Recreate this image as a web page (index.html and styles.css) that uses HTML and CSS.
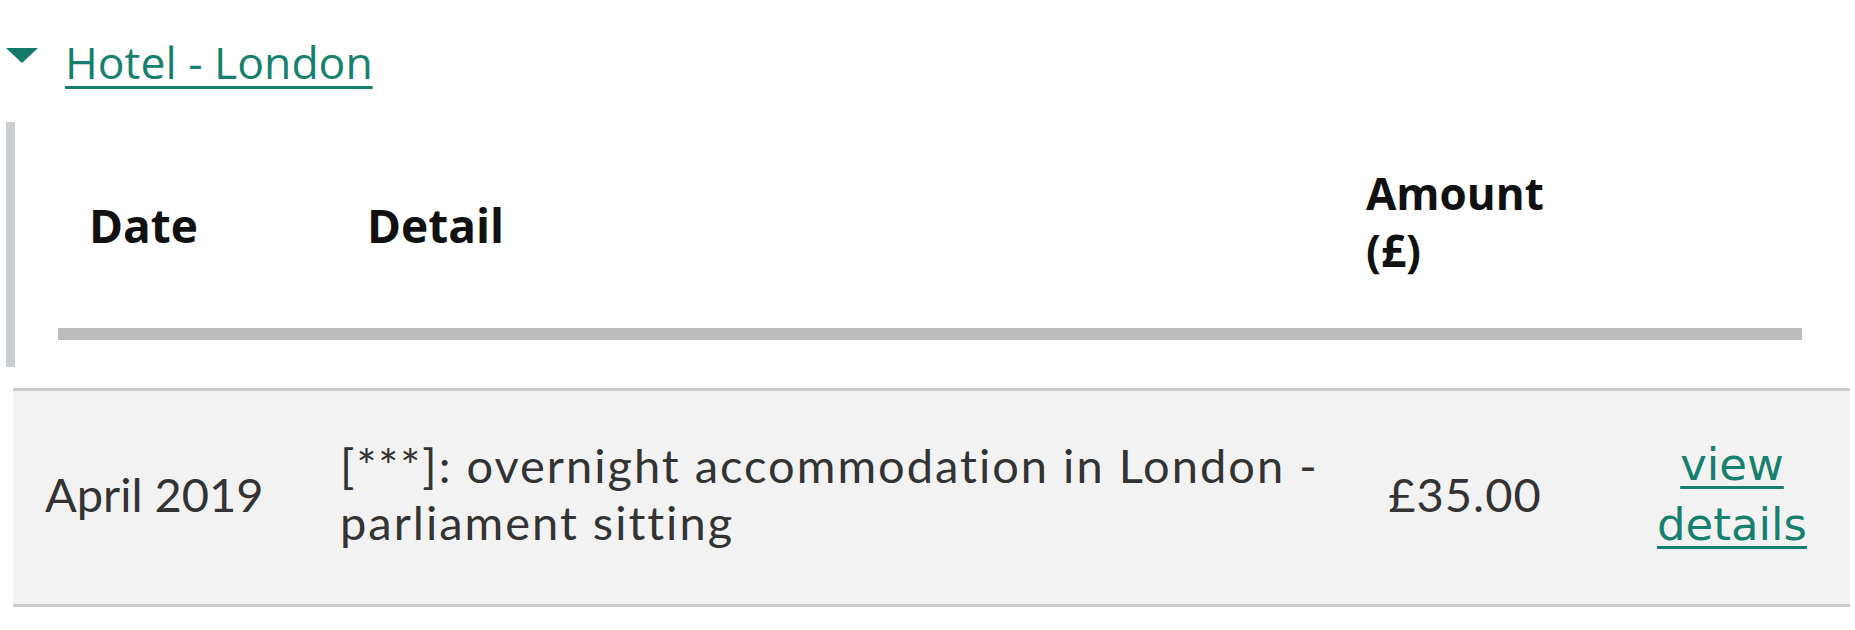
FILE: index.html
```html
<!DOCTYPE html>
<html lang="en">
<head>
<meta charset="utf-8">
<title>Hotel - London</title>
<link rel="stylesheet" href="styles.css">
</head>
<body>
<section class="group">
  <div class="summary">
    <span class="caret"></span>
    <a class="summary-link" href="#">Hotel - London</a>
  </div>
  <div class="head-wrap">
    <div class="thead">
      <div class="th th-date">Date</div>
      <div class="th th-detail">Detail</div>
      <div class="th th-amount">Amount<br>(£)</div>
      <div class="th th-link"></div>
    </div>
    <div class="rule"></div>
  </div>
  <div class="row">
    <div class="td td-date">April 2019</div>
    <div class="td td-detail">[***]: overnight accommodation in London - parliament sitting</div>
    <div class="td td-amount">£35.00</div>
    <div class="td td-link"><a href="#">view<br>details</a></div>
  </div>
</section>
</body>
</html>
```
FILE: styles.css
```css
html, body {
  margin: 0;
  padding: 0;
  background: #ffffff;
}

body {
  font-family: "Lato", "Liberation Sans", sans-serif;
  color: #333333;
}

.group {
  width: 1855px;
}

.summary {
  display: flex;
  align-items: center;
  height: 122px;
  padding-left: 6px;
  padding-bottom: 0;
  box-sizing: border-box;
}

.caret {
  width: 0;
  height: 0;
  border-left: 16px solid transparent;
  border-right: 16px solid transparent;
  border-top: 15px solid #137a69;
  margin-top: -12px;
}

.summary-link {
  margin-left: 27px;
  font-family: "Open Sans", sans-serif;
  font-size: 44.5px;
  color: #16806f;
  text-decoration: underline;
  text-decoration-thickness: 3px;
  text-underline-offset: 7px;
}

.head-wrap {
  margin-left: 6px;
  border-left: 9px solid #c9cdd0;
  padding-left: 43px;
  padding-right: 53px;
  padding-bottom: 27px;
}

.thead {
  display: grid;
  grid-template-columns: 274px 999px 230px 1fr;
  align-items: center;
  height: 206px;
  color: #111111;
  font-family: "Open Sans", sans-serif;
  font-weight: 700;
}

.th {
  padding-left: 35px;
}

.th-date {
  padding-left: 31px;
}

.th-date,
.th-detail {
  font-size: 46px;
}

.th-amount {
  font-size: 44px;
  line-height: 57px;
  margin-top: -6px;
}

.rule {
  height: 12px;
  background: #bcbcbc;
}

.row {
  display: grid;
  grid-template-columns: 297px 1030px 250px 1fr;
  align-items: center;
  margin-left: 13px;
  margin-right: 5px;
  margin-top: 21px;
  height: 219px;
  box-sizing: border-box;
  background: #f2f2f2;
  border-top: 3px solid #cccccc;
  border-bottom: 3px solid #cccccc;
  font-size: 47px;
  line-height: 57px;
  color: #333333;
}

.td-date {
  padding-left: 32px;
  margin-top: -6px;
}

.td-detail {
  padding-left: 30px;
  padding-right: 0;
  font-size: 47px;
  letter-spacing: 2px;
  margin-top: -8px;
}

.td-amount {
  text-align: center;
  letter-spacing: 1px;
  margin-top: -6px;
}

.td-link {
  text-align: center;
  font-family: "DejaVu Sans", sans-serif;
  font-size: 45px;
  line-height: 60px;
  padding-left: 24px;
  margin-top: -6px;
}

.td-link a {
  color: #16806f;
  text-decoration: underline;
  text-decoration-thickness: 3px;
  text-underline-offset: 6px;
}
```
